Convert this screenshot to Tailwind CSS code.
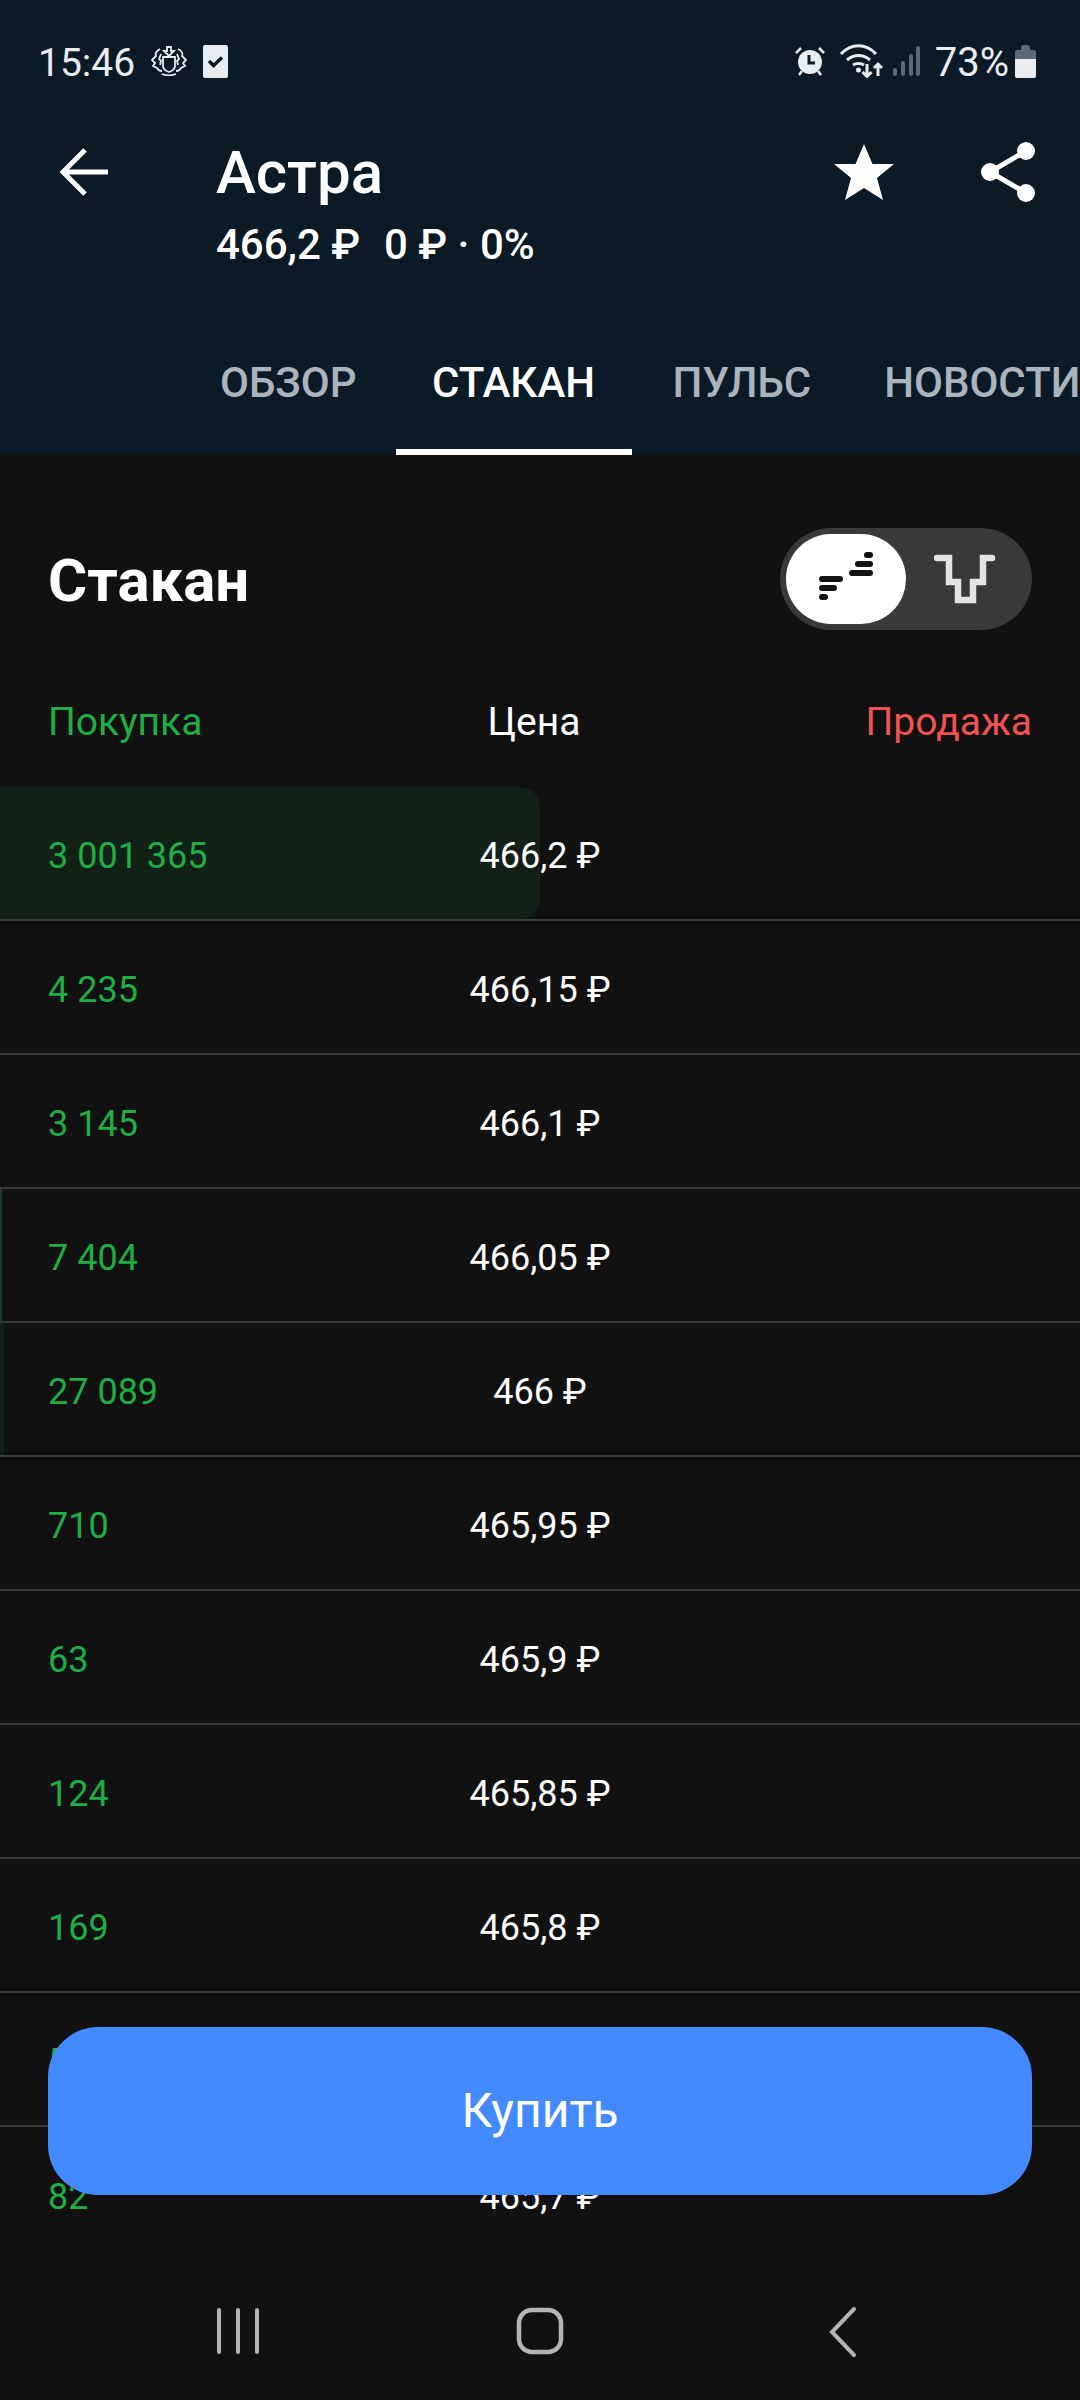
<!DOCTYPE html>
<html lang="ru">

<head>
    <meta charset="UTF-8">
    <meta name="viewport" content="width=device-width, initial-scale=1.0">
    <script src="https://cdn.jsdelivr.net/npm/@tailwindcss/browser@4"></script>
    <title>Стакан</title>
</head>

<body class="bg-[#111112] font-['Roboto',sans-serif]">
    <div class="relative w-[1080px] h-[2400px] overflow-hidden">
        <!-- header -->
        <header class="bg-[#0a1a26] h-[455px] flex flex-col">
            <div class="flex justify-between items-center h-[60px] mt-[31px] pl-[38px] pr-[44px] text-[#e9edf0]">
                <div class="flex items-center">
                    <span class="text-[39px] pt-[4px]">15:46</span>
                    <svg class="ml-[16px]" width="36" height="30" viewBox="0 0 36 30" fill="none" stroke="#e9edf0" stroke-width="1.800">
                        <path d="M16 1h4v4h3l-5 5-5-5h3z" />
                        <path d="M12 11h12v9c0 3-3 5-6 6-3-1-6-3-6-6z" />
                        <path d="M9 3C5 5 4 8 5 10L1 14l3 3-2 3 4 2c1 2 3 3 5 3 M27 3c4 2 5 5 4 7l4 4-3 3 2 3-4 2c-1 2-3 3-5 3" />
                        <path d="M10 8L8 13l2 2-1 4M26 8l2 5-2 2 1 4M11 28c4 1.500 10 1.500 14 0" />
                    </svg>
                    <svg class="ml-[16px]" width="25" height="33" viewBox="0 0 25 33">
                        <rect width="25" height="33" rx="2" fill="#e9edf0" />
                        <path d="M6 16l4.500 4.500L19 12.500" fill="none" stroke="#0a1a26" stroke-width="3.500" />
                    </svg>
                </div>
                <div class="flex items-center">
                    <svg width="30" height="30" viewBox="0 0 30 30" fill="#e9edf0">
                        <circle cx="15" cy="16" r="12" />
                        <path d="M1 7l5-5M29 7l-5-5M4 29l3-4M26 29l-3-4" stroke="#e9edf0" stroke-width="2.500" />
                        <path d="M14 9v8h6" fill="none" stroke="#0a1a26" stroke-width="3" />
                    </svg>
                    <svg class="ml-[14px]" width="44" height="34" viewBox="0 0 44 34" fill="none" stroke="#e9edf0" stroke-width="3">
                        <path d="M2 10c10-11 25-11 35 0M8 16c7-6 16-6 23 0M14 21c3-2 8-2 11 0" />
                        <circle cx="19.500" cy="26" r="2.500" fill="#e9edf0" stroke="none" />
                        <path d="M28 20v12M23.500 28l4.500 4.500 4.500-4.500M39 32V20M35 24l4-4 4 4" />
                    </svg>
                    <svg class="ml-[10px]" width="27" height="30" viewBox="0 0 27 30" fill="#5b6a74">
                        <rect x="0" y="22" width="4" height="8" rx="2" />
                        <rect x="8" y="15" width="4" height="15" rx="2" />
                        <rect x="16" y="8" width="4" height="22" rx="2" />
                        <rect x="23" y="0" width="4" height="30" rx="2" />
                    </svg>
                    <span class="ml-[15px] text-[40px] pt-[4px]">73%</span>
                    <svg class="ml-[6px]" width="21" height="33" viewBox="0 0 21 33">
                        <path d="M6 3q0-3 3-3h3q3 0 3 3v2h4q2 0 2 2v7H0V7q0-2 2-2h4z" fill="#5b6a74" />
                        <path d="M0 14h21v17q0 2-2 2H2q-2 0-2-2z" fill="#e9edf0" />
                    </svg>
                </div>
            </div>

            <div class="flex items-start mt-[47px] text-white">
                <div class="w-[216px] pl-[60px] pt-[10px] shrink-0">
                    <svg width="48" height="48" viewBox="0 0 48 48" fill="none" stroke="white" stroke-width="5">
                        <path d="M48 24H4M25 2L3 24l22 22" />
                    </svg>
                </div>
                <div class="flex-1 pt-[6px]">
                    <h1 class="text-[60px] leading-[58px] font-medium">Астра</h1>
                    <p class="text-[42px] leading-[48px] font-medium whitespace-pre mt-[19px]">466,2 ₽  <span class="ml-[3px]">0 ₽ · 0%</span></p>
                </div>
                <svg class="mt-[5px] mr-[87px]" width="60" height="58" viewBox="0 0 60 58" fill="white">
                    <path d="M30 1l8.500 20H60L43 35l6 22-19-12-19 12 6-22L0 21h21.500z" />
                </svg>
                <svg class="mt-[4px] mr-[45px]" width="54" height="60" viewBox="0 0 54 60" fill="none" stroke="white" stroke-width="5">
                    <path d="M45 9L9 30l36 21" />
                    <circle cx="45" cy="9" r="9" fill="white" stroke="none" />
                    <circle cx="9" cy="30" r="9" fill="white" stroke="none" />
                    <circle cx="45" cy="51" r="9" fill="white" stroke="none" />
                </svg>
            </div>

            <nav class="flex mt-auto h-[120px] pl-[196px] text-[42px] leading-[48px] font-medium uppercase whitespace-nowrap overflow-hidden">
                <a class="shrink-0 px-[24px] pt-[24px] text-[#aab4bc]" href="#">Обзор</a>
                <a class="shrink-0 ml-[15px] w-[236px] h-[120px] text-center pt-[24px] text-white border-b-[6px] border-white" href="#">Стакан</a>
                <a class="shrink-0 ml-[17px] px-[24px] pt-[24px] text-[#aab4bc]" href="#">Пульс</a>
                <a class="shrink-0 ml-[25px] px-[24px] pt-[24px] text-[#aab4bc]" href="#">Новости</a>
            </nav>
        </header>

        <!-- title + switch -->
        <div class="flex justify-between items-center h-[102px] mt-[73px] px-[48px]">
            <h2 class="text-white text-[60px] font-bold pt-[4px]">Стакан</h2>
            <div class="flex items-center w-[252px] h-[102px] p-[6px] rounded-full bg-[#393939]">
                <div class="flex items-center justify-center w-[120px] h-[90px] rounded-full bg-white">
                    <svg width="56" height="56" viewBox="0 0 56 56" fill="none" stroke="#111213" stroke-width="6" stroke-linecap="round">
                        <path d="M4 28h18M4 37h12M4 46h3M34 22h18M40 13h12M49 4h3" />
                    </svg>
                </div>
                <div class="flex-1 flex items-center justify-center">
                    <svg width="64" height="52" viewBox="0 0 64 52" fill="none" stroke="#e4e4e4" stroke-width="6.500" stroke-linecap="round">
                        <path d="M3 5h12v24h9v18h15V29h10V5h9" />
                    </svg>
                </div>
            </div>
        </div>

        <!-- column titles -->
        <div class="flex justify-between items-center h-[60px] mt-[62px] px-[48px] text-[39px]">
            <span class="w-[254px] text-[#1fae45]">Покупка</span>
            <span class="text-white">Цена</span>
            <span class="w-[266px] text-right text-[#f25252]">Продажа</span>
        </div>

        <!-- order book -->
        <div class="mt-[35px] text-[36px]">
            <div class="relative flex items-center h-[134px] border-b-2 border-[#3a3b3c] pl-[48px] pt-[6px]">
                <div class="absolute left-0 top-0 bottom-0 w-[540px] rounded-r-[20px] bg-[#122118]"></div>
                <span class="relative text-[#1fae45]">3 001 365</span>
                <span class="absolute left-0 right-0 text-center text-white">466,2 ₽</span>
            </div>
            <div class="relative flex items-center h-[134px] border-b-2 border-[#3a3b3c] pl-[48px] pt-[6px]">
                <span class="text-[#1fae45]">4 235</span>
                <span class="absolute left-0 right-0 text-center text-white">466,15 ₽</span>
            </div>
            <div class="relative flex items-center h-[134px] border-b-2 border-[#3a3b3c] pl-[48px] pt-[6px]">
                <span class="text-[#1fae45]">3 145</span>
                <span class="absolute left-0 right-0 text-center text-white">466,1 ₽</span>
            </div>
            <div class="relative flex items-center h-[134px] border-b-2 border-[#3a3b3c] pl-[48px] pt-[6px]">
                <div class="absolute left-0 top-0 bottom-0 w-[2px] bg-[#1d3a26]"></div>
                <span class="text-[#1fae45]">7 404</span>
                <span class="absolute left-0 right-0 text-center text-white">466,05 ₽</span>
            </div>
            <div class="relative flex items-center h-[134px] border-b-2 border-[#3a3b3c] pl-[48px] pt-[6px]">
                <div class="absolute left-0 top-0 bottom-0 w-[4px] bg-[#122118]"></div>
                <span class="text-[#1fae45]">27 089</span>
                <span class="absolute left-0 right-0 text-center text-white">466 ₽</span>
            </div>
            <div class="relative flex items-center h-[134px] border-b-2 border-[#3a3b3c] pl-[48px] pt-[6px]">
                <span class="text-[#1fae45]">710</span>
                <span class="absolute left-0 right-0 text-center text-white">465,95 ₽</span>
            </div>
            <div class="relative flex items-center h-[134px] border-b-2 border-[#3a3b3c] pl-[48px] pt-[6px]">
                <span class="text-[#1fae45]">63</span>
                <span class="absolute left-0 right-0 text-center text-white">465,9 ₽</span>
            </div>
            <div class="relative flex items-center h-[134px] border-b-2 border-[#3a3b3c] pl-[48px] pt-[6px]">
                <span class="text-[#1fae45]">124</span>
                <span class="absolute left-0 right-0 text-center text-white">465,85 ₽</span>
            </div>
            <div class="relative flex items-center h-[134px] border-b-2 border-[#3a3b3c] pl-[48px] pt-[6px]">
                <span class="text-[#1fae45]">169</span>
                <span class="absolute left-0 right-0 text-center text-white">465,8 ₽</span>
            </div>
            <div class="relative flex items-center h-[134px] border-b-2 border-[#3a3b3c] pl-[48px] pt-[6px]">
                <span class="text-[#1fae45]">5</span>
                <span class="absolute left-0 right-0 text-center text-white">465,75 ₽</span>
            </div>
            <div class="relative flex items-center h-[134px] pl-[48px] pt-[6px]">
                <span class="text-[#1fae45]">82</span>
                <span class="absolute left-0 right-0 text-center text-white">465,7 ₽</span>
            </div>
        </div>

        <!-- buy button -->
        <button class="absolute left-[48px] top-[2027px] w-[984px] h-[168px] rounded-[50px] bg-[#448aff] text-white text-[48px]">Купить</button>

        <!-- android nav bar -->
        <div class="absolute left-0 right-0 bottom-0 h-[130px]">
            <svg class="absolute left-[216px] top-[37px]" width="44" height="48" viewBox="0 0 44 48" fill="none" stroke="#b4b4b4" stroke-width="4" stroke-linecap="round">
                <path d="M3 3v42M22 3v42M41 3v42" />
            </svg>
            <svg class="absolute left-[516px] top-[37px]" width="48" height="48" viewBox="0 0 48 48" fill="none" stroke="#b4b4b4" stroke-width="4.500">
                <rect x="3" y="3" width="42" height="42" rx="13" />
            </svg>
            <svg class="absolute left-[828px] top-[36px]" width="30" height="52" viewBox="0 0 30 52" fill="none" stroke="#b4b4b4" stroke-width="4" stroke-linecap="round">
                <path d="M26 3L4 26l22 23" />
            </svg>
        </div>
    </div>
</body>

</html>
